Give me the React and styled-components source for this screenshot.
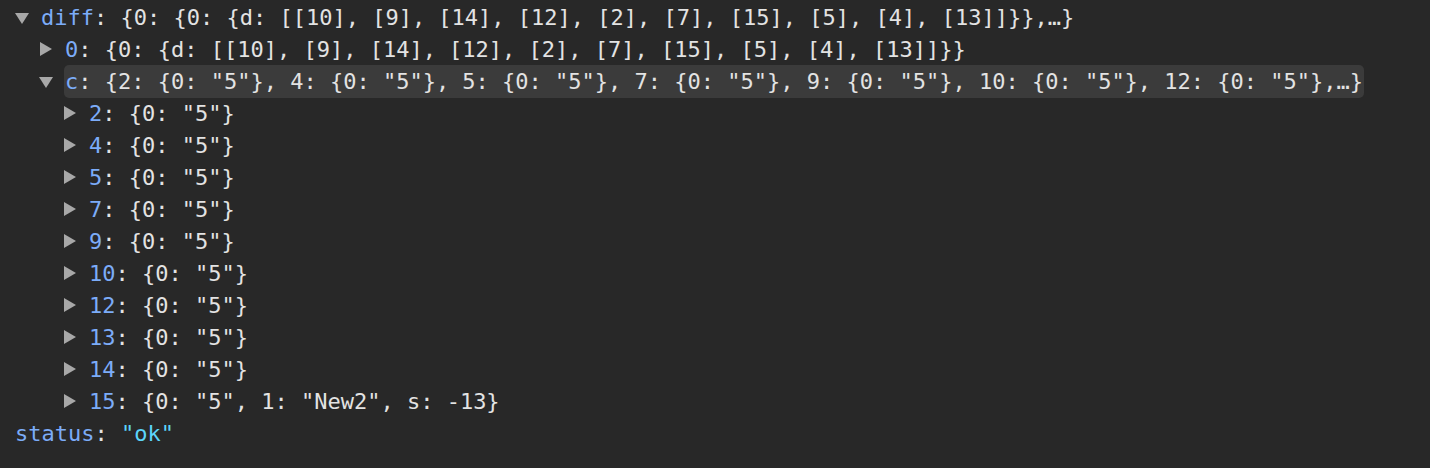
import React from 'react';
import styled, { createGlobalStyle } from 'styled-components';

const GlobalStyle = createGlobalStyle`
  html, body {
    margin: 0;
    padding: 0;
    background: #282828;
  }
`;

const Console = styled.div`
  width: 1430px;
  height: 468px;
  box-sizing: border-box;
  padding-top: 1px;
  background: #282828;
  color: #e3e3e3;
  font-family: "DejaVu Sans Mono", "Liberation Mono", monospace;
  font-size: 22px;
  line-height: 32px;
  white-space: pre;
  overflow: hidden;
`;

const Row = styled.div`
  display: flex;
  align-items: center;
  height: 32px;
  padding-left: ${(p) => 15 + p.$level * 24}px;
`;

const Toggle = styled.span`
  flex: none;
  width: 0;
  height: 0;
  margin-right: 12px;
  ${(p) =>
    p.$open
      ? `
    border-left: 7px solid transparent;
    border-right: 7px solid transparent;
    border-top: 11px solid #a8a8a8;
    margin-top: 2px;
  `
      : `
    border-top: 7px solid transparent;
    border-bottom: 7px solid transparent;
    border-left: 12px solid #a8a8a8;
    margin-left: 1px;
    margin-right: 13px;
  `}
`;

const Line = styled.span`
  display: inline-block;
  padding: 0 1px;
  margin-left: -1px;
  border-radius: 5px;
  background: ${(p) => (p.$selected ? '#3b3b3b' : 'transparent')};
  line-height: 33px;
`;

const Key = styled.span`
  color: #7cacf8;
`;

const Str = styled.span`
  color: #5cd5fb;
`;

const items = [2, 4, 5, 7, 9, 10, 12, 13, 14];
const order = '[[10], [9], [14], [12], [2], [7], [15], [5], [4], [13]]';

export default function App() {
  return (
    <>
      <GlobalStyle />
      <Console>
        <Row $level={0}>
          <Toggle $open />
          <Line>
            <Key>diff</Key>: {`{0: {0: {d: ${order}}},…}`}
          </Line>
        </Row>
        <Row $level={1}>
          <Toggle />
          <Line>
            <Key>0</Key>: {`{0: {d: ${order}}}`}
          </Line>
        </Row>
        <Row $level={1}>
          <Toggle $open />
          <Line $selected>
            <Key>c</Key>: {'{2: {0: "5"}, 4: {0: "5"}, 5: {0: "5"}, 7: {0: "5"}, 9: {0: "5"}, 10: {0: "5"}, 12: {0: "5"},…}'}
          </Line>
        </Row>
        {items.map((n) => (
          <Row key={n} $level={2}>
            <Toggle />
            <Line>
              <Key>{n}</Key>: {'{0: "5"}'}
            </Line>
          </Row>
        ))}
        <Row $level={2}>
          <Toggle />
          <Line>
            <Key>15</Key>: {'{0: "5", 1: "New2", s: -13}'}
          </Line>
        </Row>
        <Row $level={0}>
          <Line>
            <Key>status</Key>: <Str>"ok"</Str>
          </Line>
        </Row>
      </Console>
    </>
  );
}
